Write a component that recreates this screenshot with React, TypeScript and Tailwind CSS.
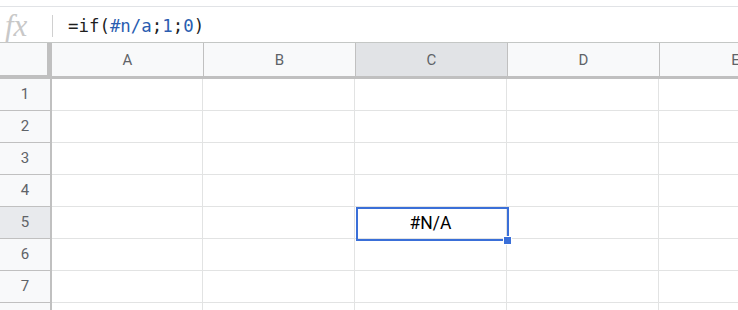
import React from 'react';

const columns = ['A', 'B', 'C', 'D', 'E'];
const rows = [1, 2, 3, 4, 5, 6, 7, 8];

const ROBOTO = { fontFamily: 'Roboto, "Noto Sans", sans-serif' };

export default function App() {
  return (
    <div className="w-[738px] h-[310px] overflow-hidden bg-white relative" style={ROBOTO}>
      {/* top strip */}
      <div className="h-[7px] border-b border-[#e1e3e6]" />

      {/* formula bar */}
      <div className="h-[36px] flex items-center border-b border-[#c4c7c5]">
        <div className="w-[52px] flex items-center">
          <span
            className="pl-[5px] text-[31px] italic leading-none text-[#c8c8c8] mt-[1px]"
            style={{ fontFamily: '"Liberation Serif", serif' }}
          >
            fx
          </span>
        </div>
        <div className="w-px h-[22px] bg-[#d0d0d0] mt-[2px]" />
        <div
          className="pl-[15px] text-[17.4px] text-[#1f1f1f] mt-[3px]"
          style={{ fontFamily: '"DejaVu Sans Mono", monospace' }}
        >
          =if(<span className="text-[#2a5db0]">#n/a</span>;<span className="text-[#2a5db0]">1</span>;<span className="text-[#2a5db0]">0</span>)
        </div>
      </div>

      {/* column header row */}
      <div className="flex h-[36px]">
        <div className="w-[52px] shrink-0 bg-[#f8f9fa] border-r-[5px] border-b-[4px] border-[#c0c0c0]" />
        {columns.map((c) => (
          <div
            key={c}
            className={`w-[152px] shrink-0 flex items-center justify-center pt-[2px] border-r border-b-[3px] border-[#c0c0c0] text-[15px] text-[#5f6368] ${
              c === 'C' ? 'bg-[#e1e3e6]' : 'bg-[#f8f9fa]'
            }`}
          >
            {c}
          </div>
        ))}
      </div>

      {/* body */}
      {rows.map((r) => (
        <div key={r} className="flex h-[32px]">
          <div
            className={`w-[52px] shrink-0 flex items-center justify-center border-r-2 border-b border-r-[#c0c0c0] border-b-[#c0c0c0] text-[15px] text-[#5f6368] ${
              r === 5 ? 'bg-[#e8eaed]' : 'bg-[#f8f9fa]'
            }`}
          >
            {r}
          </div>
          {columns.map((c, i) => (
            <div
              key={c}
              className={`${i === 0 ? 'w-[151px]' : 'w-[152px]'} shrink-0 flex items-center justify-center pt-[2px] border-r border-b border-[#e2e3e3] text-[17.5px] text-black`}
            >
              {r === 5 && c === 'C' ? '#N/A' : ''}
            </div>
          ))}
        </div>
      ))}

      {/* selection outline on C5 */}
      <div className="absolute left-[356px] top-[207px] w-[153px] h-[34px] border-2 border-[#3a6fd8] pointer-events-none" />
      <div className="absolute left-[503px] top-[236px] w-[9px] h-[9px] bg-[#3a6fd8] border border-white" />
    </div>
  );
}
